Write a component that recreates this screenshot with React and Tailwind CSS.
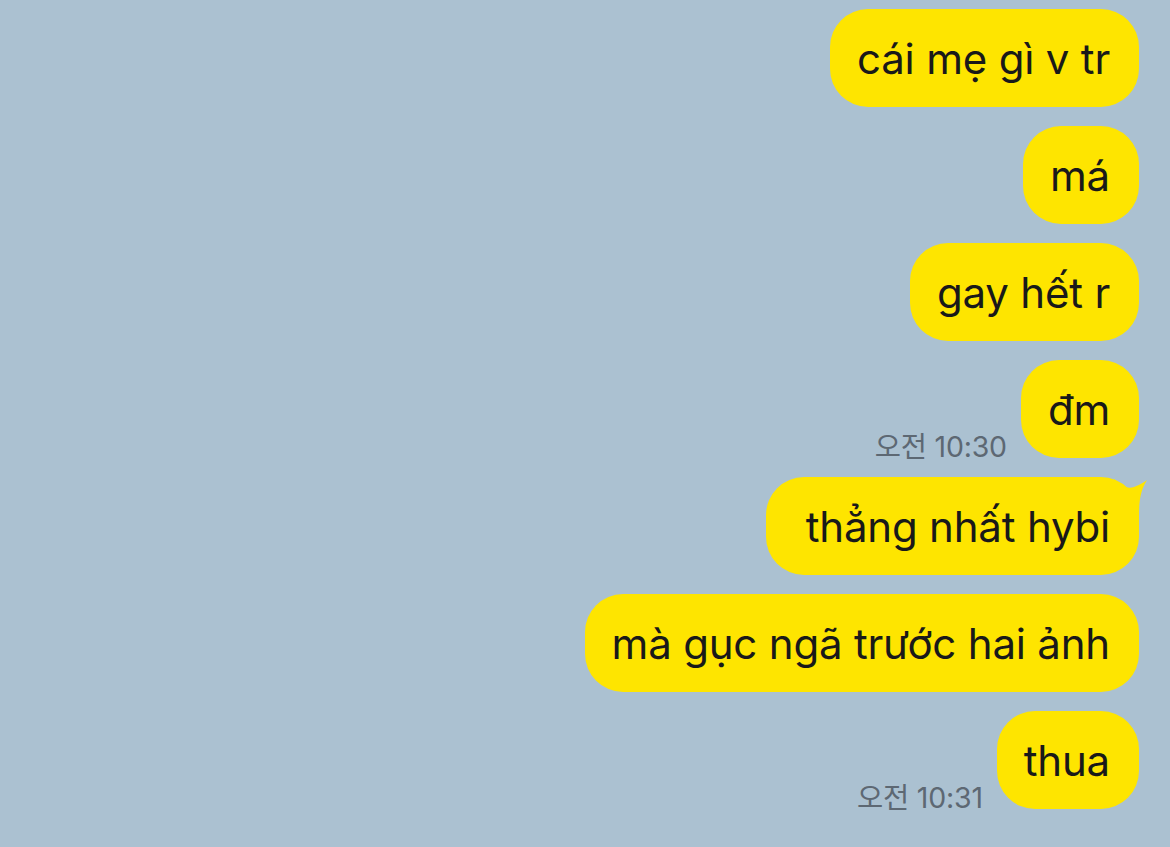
const messages = [
  { id: 1, text: 'cái mẹ gì v tr' },
  { id: 2, text: 'má' },
  { id: 3, text: 'gay hết r' },
  { id: 4, text: 'đm', time: '오전 10:30' },
  { id: 5, text: 'thẳng nhất hybi', tail: true },
  { id: 6, text: 'mà gục ngã trước hai ảnh' },
  { id: 7, text: 'thua', time: '오전 10:31' },
];

const Bubble = ({ msg }) => (
  <div className="flex items-end gap-[14px]">
    {msg.time && (
      <span className="text-[28.5px] leading-[30px] text-[#5d6873] mb-[-4px] tracking-[-0.2px]">
        {msg.time}
      </span>
    )}
    <div className="relative">
      {msg.tail && (
        <svg
          className="absolute right-[-9px] top-0"
          width="34"
          height="38"
          viewBox="0 0 34 38"
        >
          <path d="M0 2 C 8 10 14 12 20 10 C 26 8 30 5 33 3 C 28 11 25 20 25 38 L 0 38 Z" fill="#fee500" />
        </svg>
      )}
      <div
        className={
          msg.tail
            ? 'relative bg-[#fee500] rounded-[38px] h-[98px] pl-[40px] pr-[29px] flex items-center text-[42px] text-[#191919] tracking-[-0.2px]'
            : 'relative bg-[#fee500] rounded-[38px] h-[98px] pl-[27px] pr-[29px] flex items-center text-[42px] text-[#191919] tracking-[-0.2px]'
        }
      >
        {msg.text}
      </div>
    </div>
  </div>
);

export default function App() {
  return (
    <div
      className="w-[1170px] h-[847px] bg-[#abc1d1] overflow-hidden pt-[9px] pr-[31px] flex flex-col items-end gap-[19px]"
      style={{ fontFamily: 'Inter, "Noto Sans CJK KR", sans-serif' }}
    >
      {messages.map((msg) => (
        <Bubble key={msg.id} msg={msg} />
      ))}
    </div>
  );
}
